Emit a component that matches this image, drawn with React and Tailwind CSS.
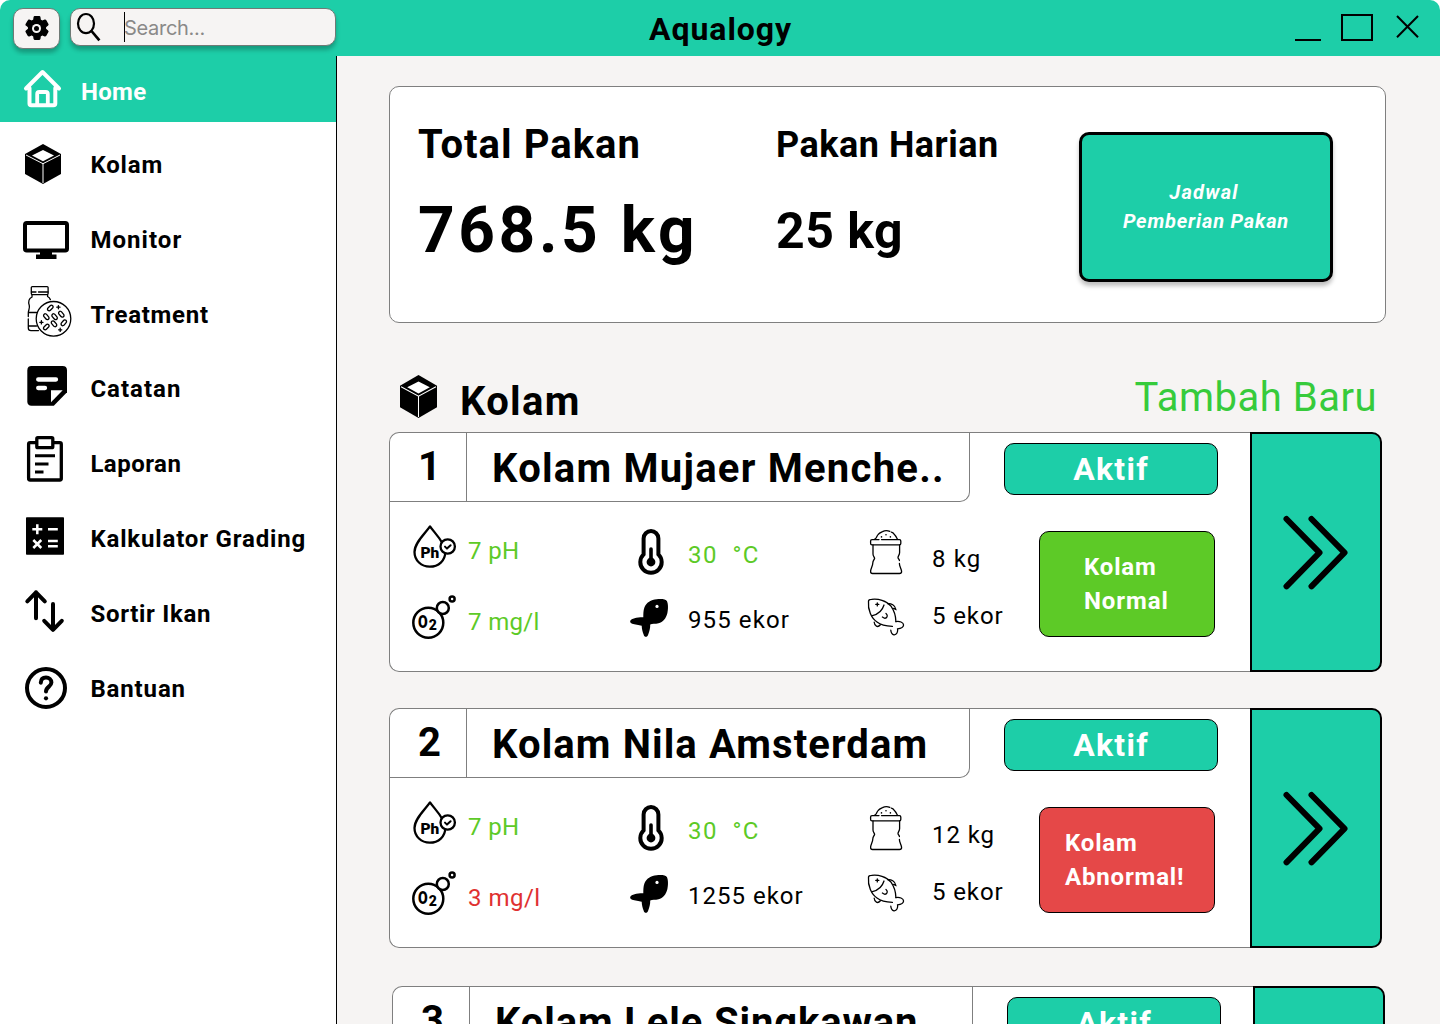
import React from 'react';
import { MdSettings } from 'react-icons/md';

function CubeIcon({ className }) {
  return (
    <svg className={className} viewBox="0 0 36 40" preserveAspectRatio="none">
      <path d="M18 0 36 10V30L18 40 0 30V10Z" fill="black" />
      <path d="M1 11 18 19.7 35 11M18 19.7V39" fill="none" stroke="white" strokeWidth="1" />
      <path d="M7 11.5 18 6 29 11.5 18 17.2Z" fill="white" />
    </svg>
  );
}

function MonitorIcon() {
  return (
    <svg className="h-[75px] w-[91px]" viewBox="0 0 91 75">
      <rect x="25" y="21" width="42" height="27.5" rx="1.8" fill="none" stroke="black" strokeWidth="4" />
      <path d="M40 50H52V52.5H56.5V57H36V52.5H40Z" />
    </svg>
  );
}

function TreatmentIcon() {
  return (
    <svg className="h-[75px] w-[91px]" viewBox="0 0 91 75" fill="none" stroke="black" strokeWidth="1.3" strokeLinecap="round">
      <rect x="31.3" y="9.6" width="16.8" height="8" rx="1" />
      <path d="M31.5 15H36M38.5 15H48" />
      <path d="M32 18V20C29 21.5 28 24.5 29.3 28.5 30 31.5 28.3 33 28.3 36V39.5M28.3 42V51Q28.3 53.6 31 53.6H38.5M28.3 35.5H36.5M28.3 49H36.5M47.6 18V19.5C49.2 20.3 50 21.3 50.4 22.7" />
      <circle cx="53.5" cy="41.8" r="17.3" fill="white" />
      <g>
        <rect x="-3.3" y="-1.7" width="6.6" height="3.4" rx="1.7" transform="translate(50.3 31) rotate(-45)" />
        <rect x="-3.3" y="-1.7" width="6.6" height="3.4" rx="1.7" transform="translate(46.3 39.7) rotate(50)" />
        <rect x="-3.3" y="-1.7" width="6.6" height="3.4" rx="1.7" transform="translate(54.6 39.7) rotate(50)" />
        <rect x="-3.3" y="-1.7" width="6.6" height="3.4" rx="1.7" transform="translate(61.3 37.2) rotate(50)" />
        <rect x="-3.3" y="-1.7" width="6.6" height="3.4" rx="1.7" transform="translate(46.3 50) rotate(-45)" />
        <rect x="-3.3" y="-1.7" width="6.6" height="3.4" rx="1.7" transform="translate(54 46.8) rotate(50)" />
        <rect x="-3.3" y="-1.7" width="6.6" height="3.4" rx="1.7" transform="translate(63.8 45.8) rotate(-50)" />
        <path d="M56.8 30.2H60M58.4 28.6V31.8M39.8 45.3H43M41.4 43.7V46.9M58.6 52.8H61.8M60.2 51.2V54.4" />
      </g>
    </svg>
  );
}

function NoteIcon() {
  return (
    <svg className="h-[75px] w-[91px]" viewBox="0 0 91 75">
      <path d="M31.5 14.3H62.5Q67 14.3 67 18.8V41.5L53.8 55.3H31.5Q27.3 55.3 27.3 51V18.8Q27.3 14.3 31.5 14.3Z" transform="translate(0 0.3) scale(1 0.965)" />
      <path d="M38.2 27.5H56M38.2 36H45" stroke="white" strokeWidth="4.3" strokeLinecap="round" />
      <path d="M51 38.3H62.7L51 50.3Z" fill="white" />
    </svg>
  );
}

function ClipboardIcon() {
  return (
    <svg className="h-[75px] w-[91px]" viewBox="0 0 91 75" fill="none" stroke="black" strokeWidth="3.3">
      <rect x="28.6" y="15.7" width="32.7" height="37.3" rx="1.5" />
      <rect x="36.8" y="10.7" width="16" height="10" rx="1" fill="white" />
      <path d="M35 28.7H55M35 37H48.5M35 45H43.5" strokeWidth="3" />
    </svg>
  );
}

function CalculatorIcon() {
  return (
    <svg className="h-[75px] w-[91px]" viewBox="0 0 91 75">
      <rect x="26" y="15.3" width="38" height="37.5" rx="0.8" />
      <path d="M32.3 27.2H42.3M37.3 22.2V32.2M48 27.2H57.8M33.3 38 41.3 46M41.3 38 33.3 46M48 39H57.8M48 44.2H57.8" stroke="white" strokeWidth="2.5" />
    </svg>
  );
}

function SortIcon() {
  return (
    <svg className="h-[75px] w-[91px]" viewBox="0 0 91 75" fill="none" stroke="black" strokeWidth="4" strokeLinecap="round" strokeLinejoin="round">
      <path d="M36 41.3V15.3M27.3 24.3 36 15.3 44.8 24.3M53 27V52.8M44.2 43.8 53 52.8 61.8 43.8" />
    </svg>
  );
}

function HelpIcon() {
  return (
    <svg className="h-[75px] w-[91px]" viewBox="0 0 91 75" fill="none" stroke="black" strokeWidth="4" strokeLinecap="round">
      <circle cx="46" cy="36" r="19" />
      <path d="M40.8 30.7C41 27 43.5 25.6 46 25.6 49 25.6 51.4 27.8 51.4 30.6 51.4 34.8 46 34.5 46 39.6" />
      <circle cx="46" cy="46.3" r="2.1" fill="black" stroke="none" />
    </svg>
  );
}

function PhIcon() {
  return (
    <svg className="h-[71px] w-[63px] shrink-0" viewBox="0 0 63 71" fill="none" stroke="black" strokeWidth="2.3" strokeLinecap="round" strokeLinejoin="round">
      <path d="M25 11.4C21 17.5 9.5 27.5 9.5 37 9.5 45.5 16.3 51.7 24.8 51.7 33.5 51.7 40.3 45.5 40.3 37 40.3 27.5 29 17.5 25 11.4Z" />
      <circle cx="42.7" cy="31.5" r="7.2" fill="white" />
      <path d="M40 31.6 42 33.6 45.6 30.2" strokeWidth="2" />
      <text x="15.5" y="43.4" fill="black" stroke="none" className="font-['Roboto'] text-[15.5px] font-black">Ph</text>
    </svg>
  );
}

function OxygenIcon() {
  return (
    <svg className="h-[71px] w-[63px] shrink-0" viewBox="0 0 63 71" fill="none" stroke="black" strokeWidth="2.5">
      <circle cx="23.3" cy="36.7" r="15" />
      <circle cx="37.8" cy="22" r="6" fill="white" />
      <circle cx="47.1" cy="13" r="2.5" />
      <text x="17" y="42.2" fill="black" stroke="none" transform="scale(0.76 1)" className="font-['Roboto'] text-[18.5px] font-black">O</text>
      <text x="23.8" y="44.3" fill="black" stroke="none" className="font-['Roboto'] text-[14px] font-black">2</text>
    </svg>
  );
}

function ThermometerIcon() {
  return (
    <svg className="h-[65px] w-[63px] shrink-0" viewBox="0 0 63 65" fill="none" stroke="black" strokeWidth="4">
      <path d="M18.6 16.5a7.4 7.4 0 0 1 14.8 0V32.4a10.7 10.7 0 1 1-14.8 0Z" />
      <path d="M26 27V40" strokeWidth="3.6" strokeLinecap="round" />
      <circle cx="26" cy="40" r="4.4" fill="black" stroke="none" />
    </svg>
  );
}

function FishSolidIcon() {
  return (
    <svg className="h-[65px] w-[63px] shrink-0" viewBox="0 0 63 65">
      <path d="M31.7 12.3C36 11.8 41.3 12.2 42 14.3 43.3 17 43.2 22.5 42.4 26 41 31.5 38 35.2 33.5 36.3 30.5 37 27 36.8 25.2 37.4 25.4 41 24.3 44.5 23.2 47.5 22.5 50.6 19.3 50.6 18.7 47.8 17.5 44.5 16.8 42 16.7 38.8 14.5 38 12 37.6 9.3 37.2 6 36.8 4.8 35.5 5.2 34 6.5 31.5 12 30.2 18.3 30.3 18.3 27 18.3 23.5 19.4 20.5 21.3 15.5 26 12.8 31.7 12.3Z" />
      <circle cx="32" cy="19.4" r="1.6" fill="white" />
    </svg>
  );
}

function SackIcon() {
  return (
    <svg className="h-[57px] w-[72px] shrink-0 overflow-visible" viewBox="0 0 72 57" fill="none" stroke="black" strokeWidth="1.3" strokeLinecap="round">
      <path d="M19 9.6H12Q10.6 9.6 10.6 11V13.4Q10.6 14.8 12 14.8H39.5Q40.8 14.8 40.8 13.4V11Q40.8 9.6 39.5 9.6H21.5" />
      <path d="M13 15V24C13 26.5 14.6 27 14.6 28.4 14 30 12.8 31 12.8 33 12.8 36 10.6 38.5 10.6 41.5Q10.6 43.5 12.5 43.5H39.5Q41.6 43.5 41.6 41.5C41.4 38.5 39.4 36.5 39.4 33.5M39.4 30.5C39.4 29 38 29 38 27.5 38 26 39.6 25 39.6 22.5V15" />
      <path d="M14.8 9.2C16.6 8.4 16.6 6.2 18 4.6 19.5 2.6 21 2.2 22.5 1.6 24.5.6 28 .6 29.8 1.4M31.4 2.2C33.4 2.4 34.4 4.6 35.4 5.8 36.5 6.9 36.6 8.4 37.6 9.2" />
      <path d="M21.5 6.9V6.9M26 4.7V4.7M30.4 6.9V6.9" strokeWidth="1.6" />
    </svg>
  );
}

function FishOutlineIcon() {
  return (
    <svg className="h-[57px] w-[72px] shrink-0 overflow-visible" viewBox="0 0 72 57" fill="none" stroke="black" strokeWidth="1.3" strokeLinecap="round">
      <path d="M32.4 39.4C27 39.2 21 38.2 17 35 11.5 31.5 7.6 23 8.5 14.2 8.7 12.8 10 12.4 11.5 12.4 18 11.6 26.5 13.4 31 19.2 34 23.5 35.8 28.5 35.9 34.6" />
      <path d="M24 18C22.5 23 18.5 27.2 12.4 28.6M15.8 17.4H18.8M17.3 15.9V18.9" />
      <path d="M27.8 16.6C30.8 16.2 35.4 18 35.8 22.4L33.6 21.4M14.2 35.2C14.6 39.2 17.6 41 20.4 37.8M26 26.4C28.6 28.4 26.8 31.6 24.4 31.2L22.4 30" />
      <path d="M35.9 34.6C39.5 33.8 43.4 35.4 43.6 38 43.2 41.2 40 41.6 37.6 41.8 38 44.8 36.8 48 34 47.8 31.8 47.4 31 45.2 30.8 43.2" />
    </svg>
  );
}

function ChevronsIcon() {
  return (
    <svg className="h-[76px] w-[68px]" viewBox="0 0 68 76" fill="none" stroke="black" strokeWidth="6" strokeLinecap="round" strokeLinejoin="round">
      <path d="M4.5 5 37.5 38.7 4.5 72.3M29.5 5 62.5 38.7 29.5 72.3" />
    </svg>
  );
}

const navItems = [
  { label: 'Kolam', style: 'tracking-[0.83px]', icon: <div className="flex h-[75px] w-[91px] pl-[25px] pt-[17px]"><CubeIcon className="h-10 w-9" /></div> },
  { label: 'Monitor', style: 'tracking-[1.05px]', icon: <MonitorIcon /> },
  { label: 'Treatment', style: 'tracking-[0.72px]', icon: <TreatmentIcon /> },
  { label: 'Catatan', style: 'pb-0.5 tracking-[1px]', icon: <NoteIcon /> },
  { label: 'Laporan', style: 'pb-0.5 tracking-[0.48px]', icon: <ClipboardIcon /> },
  { label: 'Kalkulator Grading', style: 'pb-0.5 tracking-[0.83px]', icon: <CalculatorIcon /> },
  { label: 'Sortir Ikan', style: 'pb-0.5 tracking-[0.7px]', icon: <SortIcon /> },
  { label: 'Bantuan', style: 'pb-0.5 tracking-[0.86px]', icon: <HelpIcon /> },
];

const pools = [
  {
    name: 'Kolam Mujaer Menche..', nameTracking: 'tracking-[1.25px]', offset: '',
    ph: '7 pH', oxygen: '7 mg/l', oxygenStyle: 'text-[#5dca27] tracking-[0.35px]',
    fish: '955 ekor', fishTracking: 'tracking-[1.1px]', feed: '8 kg', feedTracking: 'tracking-[1.1px]',
    status: 'Normal', statusBox: 'bg-[#5dca27] pl-[44px]', statusTracking: 'tracking-[0.9px]',
  },
  {
    name: 'Kolam Nila Amsterdam', nameTracking: 'tracking-[1.1px]', offset: '',
    ph: '7 pH', oxygen: '3 mg/l', oxygenStyle: 'text-[#e03131] tracking-[0.5px]',
    fish: '1255 ekor', fishTracking: 'tracking-[1px]', feed: '12 kg', feedTracking: 'tracking-[0.9px]',
    status: 'Abnormal!', statusBox: 'bg-[#e54848] pl-[25px]', statusTracking: 'tracking-[0.83px]',
  },
  {
    name: 'Kolam Lele Singkawan', nameTracking: 'tracking-[0.87px]', offset: 'ml-[3px] mt-0.5',
    ph: '7 pH', oxygen: '7 mg/l', oxygenStyle: 'text-[#5dca27] tracking-[0.35px]',
    fish: '955 ekor', fishTracking: 'tracking-[1.1px]', feed: '8 kg', feedTracking: 'tracking-[1.1px]',
    status: 'Normal', statusBox: 'bg-[#5dca27] pl-[44px]', statusTracking: 'tracking-[0.9px]',
  },
];

function Metric({ icon, text, className }) {
  return (
    <div className="flex items-center">
      {icon}
      <span className={`whitespace-pre text-2xl ${className}`}>{text}</span>
    </div>
  );
}

function PoolCard({ pool, index }) {
  return (
    <article className={`flex h-[240px] w-[993px] shrink-0 ${pool.offset}`}>
      <div className="flex w-[861px] rounded-l-[10px] border border-r-0 border-[#7f7f7f] bg-white">
        <div className="flex w-[614px] flex-col">
          <div className="flex h-[69px] w-[580px] rounded-br-[10px] border-b border-r border-[#7f7f7f] text-[40px] font-bold">
            <div className="flex w-[77px] items-center justify-center border-r border-[#7f7f7f] pl-[3px]">{index}</div>
            <div className={`flex items-center whitespace-nowrap pl-[25px] pt-[3px] ${pool.nameTracking}`}>{pool.name}</div>
          </div>
          <div className="flex pl-[15px]">
            <div className="w-[220px] pt-[13px]">
              <Metric icon={<PhIcon />} text={pool.ph} className="text-[#5dca27] tracking-[0.36px]" />
              <Metric icon={<OxygenIcon />} text={pool.oxygen} className={pool.oxygenStyle} />
            </div>
            <div className="w-[235px] pt-5">
              <Metric icon={<ThermometerIcon />} text="30  °C" className="text-[#5dca27] tracking-[1.4px]" />
              <Metric icon={<FishSolidIcon />} text={pool.fish} className={pool.fishTracking} />
            </div>
            <div className="w-[144px] shrink-0 pt-7">
              <Metric icon={<SackIcon />} text={pool.feed} className={pool.feedTracking} />
              <Metric icon={<FishOutlineIcon />} text="5 ekor" className="tracking-[0.9px]" />
            </div>
          </div>
        </div>
        <div className="flex flex-1 flex-col pt-2.5 text-white">
          <div className="flex h-[52px] w-[214px] items-center justify-center rounded-[10px] border border-black bg-[#1dcea8] text-[32px] font-bold tracking-[1.28px]">Aktif</div>
          <div className={`ml-[35px] mt-9 flex h-[106px] w-[176px] flex-col justify-center rounded-[10px] border border-black text-2xl font-bold leading-[34px] ${pool.statusBox}`}>
            <div className="tracking-[0.83px]">Kolam</div>
            <div className={pool.statusTracking}>{pool.status}</div>
          </div>
        </div>
      </div>
      <button className="flex w-[132px] items-center justify-center rounded-r-[10px] border-2 border-black bg-[#1dcea8]">
        <ChevronsIcon />
      </button>
    </article>
  );
}

export default function App() {
  return (
    <div className="flex h-[1024px] w-[1440px] flex-col overflow-hidden bg-white font-['Roboto',sans-serif] text-black">
      <header className="flex h-14 shrink-0 rounded-t-[10px] bg-[#1dcea8]">
        <div className="flex w-[649px] pl-[13px] pt-2">
          <button className="flex h-[41px] w-[47px] items-center justify-center rounded-[10px] border border-[#6f7a76] bg-[#f6f4f3] pb-px shadow-[0_4px_4px_rgba(0,0,0,0.25)]">
            <div className="grid place-items-center *:col-start-1 *:row-start-1">
              <MdSettings className="size-[28px] [&>path:last-child]:stroke-black [&>path:last-child]:stroke-[1.2]" />
              <div className="size-[9px] rounded-full bg-[#f6f4f3]" />
              <div className="size-[5px] rounded-full bg-black" />
            </div>
          </button>
          <div className="ml-2.5 flex h-[38px] w-[266px] items-center rounded-[10px] border border-[#6f7a76] bg-[#f6f4f3] shadow-[0_4px_4px_rgba(0,0,0,0.25)]">
            <svg className="h-9 w-[53px]" viewBox="0 0 53 36" fill="none" stroke="black">
              <ellipse cx="15" cy="14.6" rx="8" ry="9.6" strokeWidth="2.2" />
              <path d="M20.5 22 28.4 31.4" strokeWidth="2.7" />
            </svg>
            <div className="h-[30px] w-px bg-black" />
            <span className="-ml-px mt-0.5 font-['Inter'] text-xl tracking-[-0.3px] text-[#8a8988]">Search...</span>
          </div>
        </div>
        <h1 className="pt-1.5 text-[32px] font-bold leading-[46px] tracking-[0.95px]">Aqualogy</h1>
        <svg className="ml-auto h-14 w-[160px]" viewBox="0 0 160 56" fill="none" stroke="black" strokeWidth="2">
          <path d="M15 40H41" />
          <rect x="62" y="15" width="30" height="25" />
          <path d="M117 16 138 37.2M138 16 117 37.2" />
        </svg>
      </header>
      <div className="flex min-h-0 flex-1">
        <aside className="w-[337px] shrink-0 border-r border-black bg-white">
          <div className="flex h-[66px] bg-[#1dcea8] text-white">
            <svg className="h-[66px] w-[81px]" viewBox="0 0 81 66" fill="none" stroke="white" strokeWidth="4" strokeLinecap="round" strokeLinejoin="round">
              <path d="M26 32.5 42.5 16 59 32.5M29.5 32V47.5Q29.5 49.3 31.3 49.3H53.5Q55.3 49.3 55.3 47.5V32" />
              <path d="M37.2 49V38Q37.2 36 39.2 36H45.8Q47.8 36 47.8 38V49" strokeWidth="3.8" />
            </svg>
            <span className="pt-[3px] text-2xl font-bold leading-[66px] tracking-[0.3px]">Home</span>
          </div>
          <nav className="pt-[5px]">
            {navItems.map((item) => (
              <div key={item.label} className="flex h-[75px] items-center">
                {item.icon}
                <span className={`-ml-[0.6px] whitespace-nowrap text-2xl font-bold ${item.style}`}>{item.label}</span>
              </div>
            ))}
          </nav>
        </aside>
        <main className="flex flex-1 flex-col overflow-hidden bg-[#f6f4f3] pl-[52px] pt-[30px]">
          <section className="flex h-[237px] w-[997px] shrink-0 rounded-[10px] border border-[#7f7f7f] bg-white pl-7">
            <div className="w-[358px] pt-[38px] font-bold">
              <div className="text-[40px] leading-10 tracking-[1.03px]">Total Pakan</div>
              <div className="mt-[34px] text-[64px] leading-[64px] tracking-[3.58px]">768.5 kg</div>
            </div>
            <div className="w-[303px] pt-10 font-bold">
              <div className="text-[36px] leading-9 tracking-[0.5px]">Pakan Harian</div>
              <div className="mt-[43px] text-[50px] leading-[50px] tracking-[0.5px]">25 kg</div>
            </div>
            <button className="mt-[45px] flex h-[150px] w-[254px] flex-col items-center justify-center rounded-[10px] border-[3px] border-black bg-[#1dcea8] text-xl font-bold italic leading-[29px] text-white shadow-[0_4px_4px_rgba(0,0,0,0.25)]">
              <span className="pr-1 tracking-[1.25px]">Jadwal</span>
              <span className="tracking-[0.82px]">Pemberian Pakan</span>
            </button>
          </section>
          <div className="flex h-[109px] w-[993px] shrink-0 items-start pl-[11px]">
            <CubeIcon className="mt-[52px] h-[43px] w-[37px]" />
            <h2 className="ml-[23px] mt-[59px] text-[40px] font-bold leading-10 tracking-[1.3px]">Kolam</h2>
            <span className="ml-auto mt-[55px] pr-[5px] text-[40px] leading-10 tracking-[0.5px] text-[#36cb3b]">Tambah Baru</span>
          </div>
          <div className="flex flex-col gap-9">
            {pools.map((pool, i) => (
              <PoolCard key={pool.name} pool={pool} index={i + 1} />
            ))}
          </div>
        </main>
      </div>
    </div>
  );
}
